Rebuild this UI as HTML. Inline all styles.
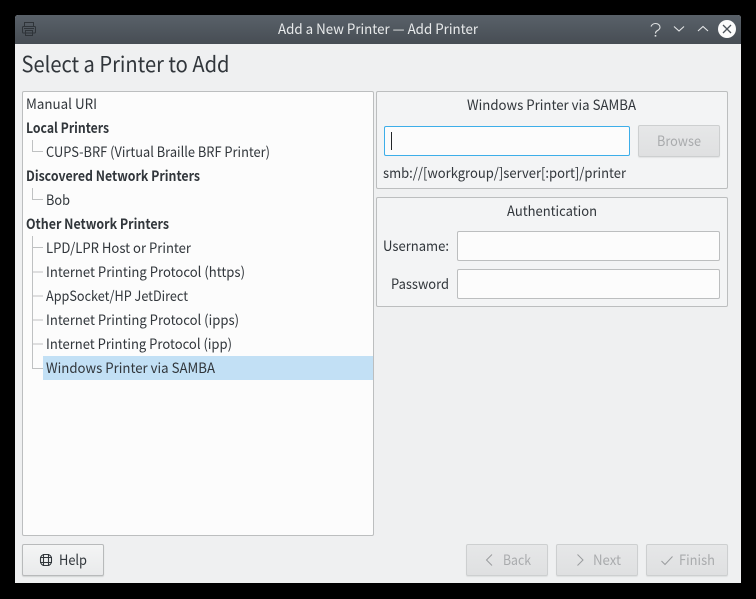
<!DOCTYPE html>
<html><head><meta charset="utf-8"><title>Add a New Printer — Add Printer</title>
<style>
html,body{margin:0;padding:0;background:#000;width:756px;height:599px;overflow:hidden}
.b{position:absolute;box-sizing:border-box}
#win{left:15px;top:15px;width:726px;height:568px;background:#eff0f1;border-radius:3px 3px 0 0;overflow:hidden}
#tb{left:15px;top:15px;width:726px;height:29px;background:linear-gradient(#596169,#474d54);border-radius:3px 3px 0 0}
.grp{background:#f3f4f5;border:1px solid #bcbebf;border-radius:2px}
.inp{background:#fcfcfc;border:1px solid #bcbebf;border-radius:2px}
.btn{background:linear-gradient(#f4f5f5,#e9eaeb);border:1px solid #b8babb;border-radius:2px;box-shadow:0 1px 1px rgba(0,0,0,.12)}
.dis{background:linear-gradient(#e6e7e8,#dfe0e1);border:1px solid #cdcfd0;border-radius:2px;box-shadow:0 1px 1px rgba(0,0,0,.07)}
svg{position:absolute;left:0;top:0}
text{font-family:"Noto Sans CJK SC","DejaVu Sans",sans-serif;font-size:14px;fill:#31363b}
.bd{font-weight:700}
.dt{fill:#a9abad}
</style></head><body>
<div class="b" id="win"></div>
<div class="b" id="tb"></div>
<div class="b inp" style="left:22px;top:91px;width:352px;height:445px"></div>
<div class="b" style="left:43px;top:356px;width:330px;height:24px;background:#c2e0f5"></div>
<div class="b grp" style="left:376px;top:91px;width:352px;height:98px"></div>
<div class="b grp" style="left:376px;top:197px;width:352px;height:110px"></div>
<div class="b" style="left:384px;top:126px;width:246px;height:30px;background:#fcfcfc;border:1px solid #3daee9;border-radius:2px"></div>
<div class="b dis" style="left:638px;top:125px;width:82px;height:32px"></div>
<div class="b inp" style="left:457px;top:231px;width:263px;height:30px"></div>
<div class="b inp" style="left:457px;top:269px;width:263px;height:30px"></div>
<div class="b btn" style="left:22px;top:544px;width:82px;height:32px"></div>
<div class="b dis" style="left:466px;top:544px;width:82px;height:32px"></div>
<div class="b dis" style="left:556px;top:544px;width:82px;height:32px"></div>
<div class="b dis" style="left:646px;top:544px;width:82px;height:32px"></div>
<svg width="756" height="599" viewBox="0 0 756 599">
<g fill="none" stroke="#2f3439" stroke-width="1">
<rect x="22.500" y="26.500" width="13" height="6.500" rx="1"/>
<path d="M24.500 26v-3.500h9V26"/>
<rect x="25.500" y="30.500" width="7" height="5"/>
<path d="M24 28.500h10"/>
</g>
<text x="278" y="34" textLength="200" lengthAdjust="spacingAndGlyphs" style="fill:#e8eaeb">Add a New Printer — Add Printer</text>
<path d="M651 26.500C652 24.300 653.700 23.500 655.500 23.500 658 23.500 660 25 660 27.200 660 29.200 658.300 30 656.800 31 655.700 31.800 655.500 32.300 655.500 33.500" fill="none" stroke="#dfe1e2" stroke-width="1.100"/>
<rect x="654.700" y="35" width="1.600" height="1.600" fill="#dfe1e2"/>
<path d="M674 26.500l5 4.500 5-4.500M698 31l5-4.500 5 4.500" fill="none" stroke="#e4e6e7" stroke-width="1.100"/>
<circle cx="727" cy="29" r="9" fill="#fcfcfc"/>
<path d="M723 25l8 8M731 25l-8 8" stroke="#4d545b" stroke-width="1.300"/>

<text x="21.500" y="72" textLength="208" lengthAdjust="spacingAndGlyphs" style="font-size:21.500px">Select a Printer to Add</text>

<text x="26" y="109" textLength="71" lengthAdjust="spacingAndGlyphs">Manual URI</text>
<text x="26" y="133" textLength="83" lengthAdjust="spacingAndGlyphs" class="bd">Local Printers</text>
<text x="46" y="157" textLength="224" lengthAdjust="spacingAndGlyphs">CUPS-BRF (Virtual Braille BRF Printer)</text>
<text x="26" y="181" textLength="174" lengthAdjust="spacingAndGlyphs" class="bd">Discovered Network Printers</text>
<text x="46" y="205" textLength="24" lengthAdjust="spacingAndGlyphs">Bob</text>
<text x="26" y="229" textLength="143" lengthAdjust="spacingAndGlyphs" class="bd">Other Network Printers</text>
<text x="46" y="253" textLength="145" lengthAdjust="spacingAndGlyphs">LPD/LPR Host or Printer</text>
<text x="46" y="277" textLength="199" lengthAdjust="spacingAndGlyphs">Internet Printing Protocol (https)</text>
<text x="46" y="301" textLength="142" lengthAdjust="spacingAndGlyphs">AppSocket/HP JetDirect</text>
<text x="46" y="325" textLength="193" lengthAdjust="spacingAndGlyphs">Internet Printing Protocol (ipps)</text>
<text x="46" y="349" textLength="186" lengthAdjust="spacingAndGlyphs">Internet Printing Protocol (ipp)</text>
<text x="46" y="373" textLength="169" lengthAdjust="spacingAndGlyphs">Windows Printer via SAMBA</text>

<path d="M32.500 140v11.500H43M32.500 188v11.500H43M32.500 236v11.500H43M32.500 248v24H43M32.500 272v24H43M32.500 296v24H43M32.500 320v24H43M32.500 344v24.500H43" fill="none" stroke="#bfc1c2" stroke-width="1"/>

<text x="467" y="110" textLength="169" lengthAdjust="spacingAndGlyphs">Windows Printer via SAMBA</text>
<path d="M391.500 132v18" stroke="#232629" stroke-width="1"/>
<text x="657" y="146" textLength="44" lengthAdjust="spacingAndGlyphs" class="dt">Browse</text>
<text x="383" y="178" textLength="243" lengthAdjust="spacingAndGlyphs">smb://[workgroup/]server[:port]/printer</text>
<text x="507" y="216" textLength="90" lengthAdjust="spacingAndGlyphs">Authentication</text>
<text x="383" y="251" textLength="66" lengthAdjust="spacingAndGlyphs">Username:</text>
<text x="391" y="289" textLength="58" lengthAdjust="spacingAndGlyphs">Password</text>

<g fill="none" stroke="#31363b" stroke-width="1.100">
<rect x="40.500" y="554.500" width="11" height="11" rx="4"/>
<path d="M43.500 554v12M48.500 554v12M40 557.500h12M40 562.500h12"/>
</g>
<text x="59" y="565" textLength="28" lengthAdjust="spacingAndGlyphs">Help</text>

<path d="M492 554.500l-5.500 5.500 5.500 5.500" fill="none" stroke="#9a9c9e" stroke-width="1"/>
<text x="503" y="565" textLength="28" lengthAdjust="spacingAndGlyphs" class="dt">Back</text>
<path d="M577.500 554.500l5.500 5.500-5.500 5.500" fill="none" stroke="#9a9c9e" stroke-width="1"/>
<text x="593" y="565" textLength="28" lengthAdjust="spacingAndGlyphs" class="dt">Next</text>
<path d="M661.500 561l3.500 3.500 7.500-8" fill="none" stroke="#9a9c9e" stroke-width="1"/>
<text x="679" y="565" textLength="36" lengthAdjust="spacingAndGlyphs" class="dt">Finish</text>
</svg>
</body></html>
